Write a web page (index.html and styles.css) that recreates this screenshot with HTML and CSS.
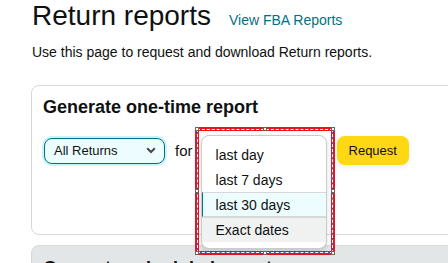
FILE: index.html
```html
<!DOCTYPE html>
<html lang="en">
<head>
<meta charset="utf-8">
<title>Return reports</title>
<link rel="stylesheet" href="styles.css">
</head>
<body>
<div class="page">
  <div class="header">
    <h1 class="title">Return reports</h1>
    <a class="link" href="#">View FBA Reports</a>
  </div>
  <p class="desc">Use this page to request and download Return reports.</p>

  <section class="card">
    <h2 class="card-title">Generate one-time report</h2>
    <div class="row">
      <div class="select">
        <span>All Returns</span>
        <svg class="chev" width="10" height="7" viewBox="0 0 10 7"><path d="M1.2 1.2 L5 5 L8.8 1.2" fill="none" stroke="#4a4a4a" stroke-width="2"/></svg>
      </div>
      <span class="for">for</span>
      <div class="anchor">
        <div class="sel">
          <div class="sel-mid">
            <div class="sel-in">
              <ul class="menu">
                <li class="item">last day</li>
                <li class="item">last 7 days</li>
                <li class="item item-focus">last 30 days</li>
                <li class="item item-hover">Exact dates</li>
              </ul>
            </div>
          </div>
          <span class="h h-tl"></span><span class="h h-tm"></span><span class="h h-tr"></span>
          <span class="h h-ml"></span><span class="h h-mr"></span>
          <span class="h h-bl"></span><span class="h h-bm"></span><span class="h h-br"></span>
        </div>
      </div>
      <button class="btn">Request</button>
    </div>
  </section>

  <section class="card card-grey">
    <h2 class="card-title">Generate scheduled report</h2>
  </section>
</div>
</body>
</html>
```
FILE: styles.css
```css
html, body {
  margin: 0;
  padding: 0;
  overflow: hidden;
  background: #fff;
}
body {
  font-family: "Liberation Sans", Arial, sans-serif;
  color: #0f1111;
}
.page {
  padding-left: 32px;
  width: 600px;
}
.header {
  display: flex;
  align-items: baseline;
}
.title {
  margin: 0;
  font-size: 28px;
  font-weight: 400;
  line-height: 32px;
}
.link {
  margin-left: 18px;
  font-size: 14px;
  color: #007185;
  text-decoration: none;
}
.desc {
  margin: 10px 0 0;
  font-size: 14px;
  line-height: 20px;
}
.card {
  margin: 23px 0 0 -1px;
  height: 150px;
  box-sizing: border-box;
  border: 1px solid #d5d9d9;
  border-radius: 8px;
  padding: 9px 0 0 11px;
}
.card-grey {
  margin-top: 10px;
  background: #e3e6e6;
  padding-top: 10px;
}
.card-title {
  margin: 0;
  font-size: 18px;
  line-height: 24px;
  font-weight: 700;
}
.row {
  display: flex;
  align-items: center;
  margin-top: 17px;
  margin-left: 1px;
  height: 29px;
}
.select {
  width: 121px;
  height: 26px;
  box-sizing: border-box;
  border: 1px solid #007185;
  border-radius: 8px;
  background: #edfdff;
  box-shadow: 0 0 0 2px #c8f3fa;
  display: flex;
  align-items: center;
  justify-content: space-between;
  padding: 0 8px 0 9px;
  font-size: 13px;
}
.chev {
  display: block;
}
.for {
  margin-left: 10px;
  font-size: 15px;
}
.anchor {
  position: relative;
  width: 140px;
  height: 29px;
  margin-left: 2px;
  flex: none;
}
.sel {
  position: absolute;
  top: -9px;
  left: 0;
  width: 140px;
  height: 128px;
  box-sizing: border-box;
  border: 2px solid #e8141e;
}
.sel-mid {
  position: relative;
  height: 100%;
  box-sizing: border-box;
  border: 1px solid #2f5fc4;
}
.sel-mid::after {
  content: "";
  position: absolute;
  inset: -1px;
  border: 1px dashed #fff;
  pointer-events: none;
}
.sel-in {
  height: 100%;
  box-sizing: border-box;
  border: 1px solid #e8141e;
  padding: 4px 4px 0 2px;
}
.menu {
  list-style: none;
  margin: 0;
  padding: 6px 0;
  background: #fff;
  border: 1px solid #c9cccc;
  border-radius: 8px;
  box-shadow: 0 2px 4px rgba(15, 17, 17, 0.15);
  overflow: hidden;
}
.item {
  height: 25px;
  box-sizing: border-box;
  padding-left: 14px;
  font-size: 14px;
  line-height: 27px;
}
.item-focus {
  background: #edfdff;
  border-top: 1px solid #d5d9d9;
  border-bottom: 1px solid #d5d9d9;
  border-left: 1px solid #007185;
  padding-left: 13px;
  line-height: 24px;
}
.item-hover {
  background: #f0f2f2;
  border-top: 1px solid #d5d9d9;
  line-height: 24px;
}
.h {
  position: absolute;
  width: 4px;
  height: 4px;
  box-sizing: border-box;
  border: 1px solid #666;
  background: #fff;
}
.h-tl { top: -2px; left: -2px; }
.h-tm { top: -2px; left: calc(50% - 2px); }
.h-tr { top: -2px; right: -2px; }
.h-ml { top: calc(50% - 2px); left: -2px; }
.h-mr { top: calc(50% - 2px); right: -2px; }
.h-bl { bottom: -2px; left: -2px; }
.h-bm { bottom: -2px; left: calc(50% - 2px); }
.h-br { bottom: -2px; right: -2px; }
.btn {
  margin-left: 2px;
  height: 29px;
  padding: 0 12px;
  border: 0;
  border-radius: 8px;
  background: #ffd814;
  box-shadow: 0 2px 5px rgba(213, 217, 217, 0.5);
  font-family: "Liberation Sans", Arial, sans-serif;
  font-size: 13px;
  color: #0f1111;
}
```
